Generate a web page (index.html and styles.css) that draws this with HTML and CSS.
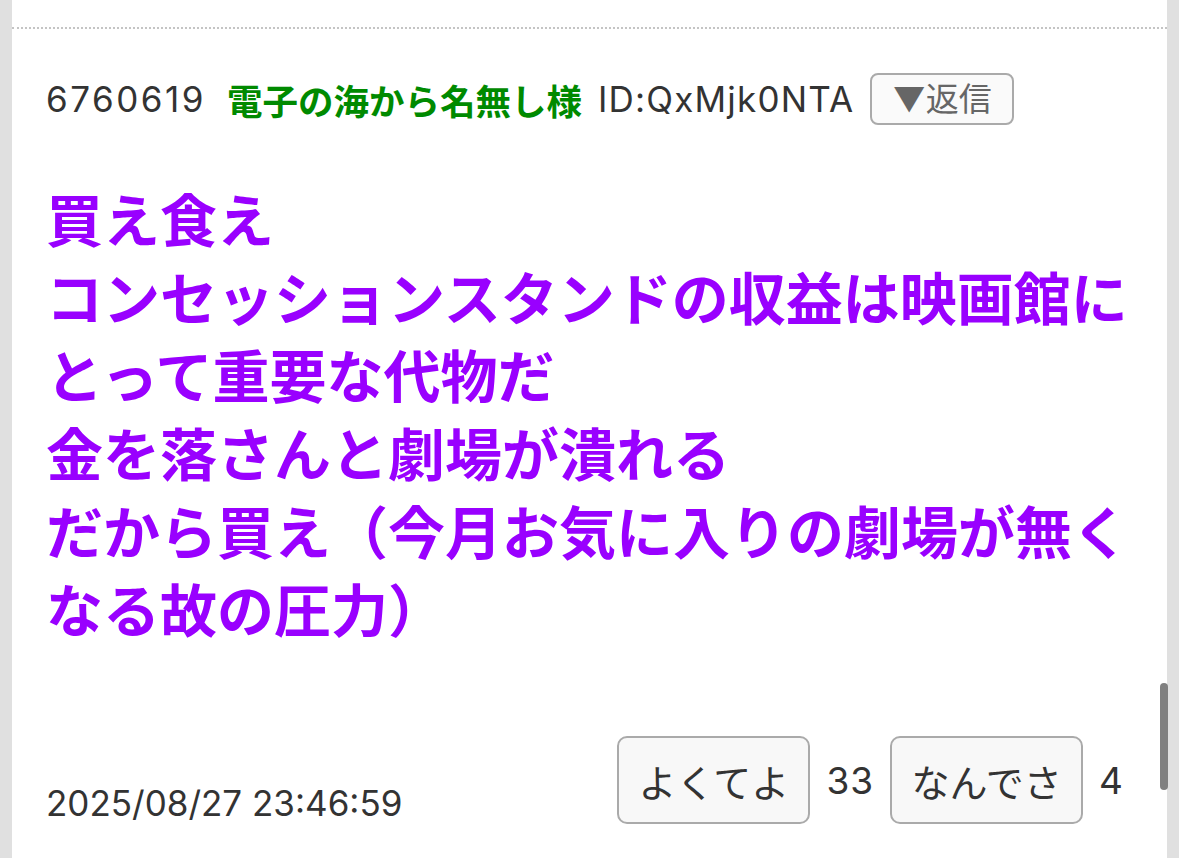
FILE: index.html
```html
<!DOCTYPE html>
<html lang="ja">
<head>
    <meta charset="UTF-8">
    <meta name="viewport" content="width=device-width, initial-scale=1.0">
    <title>レス 6760619</title>
    <link rel="stylesheet" href="styles.css">
</head>
<body>

    <div class="page">
        <div class="prev-post"></div>

        <div class="post">
            <div class="post-head">
                <span class="post-no">6760619</span>
                <span class="post-name">電子の海から名無し様</span>
                <span class="post-id">ID:QxMjk0NTA</span>
                <button class="reply-button">▼返信</button>
            </div>

            <div class="post-body">
                買え食え<br>
                コンセッションスタンドの収益は映画館にとって重要な代物だ<br>
                金を落さんと劇場が潰れる<br>
                だから買え（今月お気に入りの劇場が無くなる故の圧力）
            </div>

            <div class="post-foot">
                <span class="post-date">2025/08/27 23:46:59</span>
                <div class="votes">
                    <button class="vote-button">よくてよ</button>
                    <span class="vote-count">33</span>
                    <button class="vote-button">なんでさ</button>
                    <span class="vote-count">4</span>
                </div>
            </div>
        </div>
    </div>

    <div class="scroll-thumb"></div>

</body>
</html>
```

FILE: styles.css
```css
/* General Styling */
body {
    margin: 0;
    background: #e0e0e0;
    font-family: 'Inter', 'Noto Sans CJK JP', sans-serif;
    color: #333;
    overflow: hidden;
}

.page {
    margin: 0 12px;
    background: #fff;
    min-height: 100vh;
}

.prev-post {
    height: 27px;
}

/* Post */
.post {
    border-top: 2px dotted #c4c4c4;
    padding: 44px 34px 34px;
}

.post-head {
    display: flex;
    align-items: center;
    font-size: 35px;
    height: 52px;
}

.post-no {
    letter-spacing: 2.5px;
    margin-right: 21px;
}

.post-name {
    color: #008a00;
    font-weight: bold;
    margin-right: 16px;
    font-size: 35.5px;
}

.post-id {
    letter-spacing: 1.2px;
    margin-right: 16px;
}

.reply-button {
    font-family: inherit;
    font-size: 33px;
    color: #666;
    background: #fafafa;
    border: 2px solid #aaa;
    border-radius: 8px;
    padding: 0 20px;
    height: 52px;
    line-height: 48px;
}

.post-body {
    margin-top: 58px;
    font-size: 57px;
    line-height: 78px;
    font-weight: bold;
    color: #9900ff;
}

/* Footer */
.post-foot {
    display: flex;
    justify-content: space-between;
    align-items: flex-end;
    margin-top: 85px;
}

.post-date {
    font-size: 35px;
    line-height: 34px;
    margin-bottom: 4px;
}

.votes {
    display: flex;
    align-items: center;
}

.vote-button {
    font-family: inherit;
    font-size: 38px;
    color: #333;
    background: #f8f8f8;
    border: 2px solid #aaa;
    border-radius: 10px;
    width: 193px;
    height: 88px;
    padding: 0;
}

.vote-count {
    font-size: 37px;
    margin: 0 16px;
    letter-spacing: 1px;
}

.vote-count:last-child {
    margin-right: 9px;
}

/* Overlay scrollbar */
.scroll-thumb {
    position: fixed;
    left: 1160px;
    top: 683px;
    width: 8px;
    height: 107px;
    border-radius: 4px;
    background: #808080;
}
```
